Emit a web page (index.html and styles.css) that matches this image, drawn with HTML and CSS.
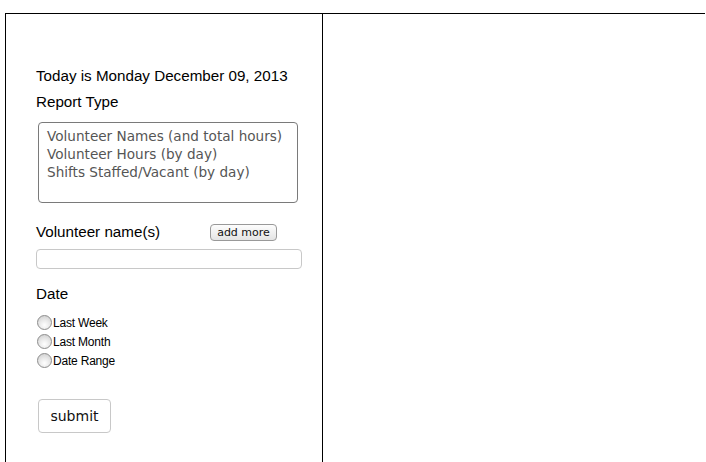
FILE: index.html
```html
<!DOCTYPE html>
<html>
<head>
<meta charset="utf-8">
<link rel="stylesheet" href="styles.css">
</head>
<body>
<div class="frame">
  <div class="side">
    <form class="form">
      <div class="today">Today is Monday December 09, 2013</div>
      <div class="label">Report Type</div>
      <div class="listbox">
        <div class="opt">Volunteer Names (and total hours)</div>
        <div class="opt">Volunteer Hours (by day)</div>
        <div class="opt">Shifts Staffed/Vacant (by day)</div>
      </div>
      <div class="namerow">
        <span class="label">Volunteer name(s)</span>
        <button type="button" class="addmore">add more</button>
      </div>
      <input class="textin" type="text">
      <div class="label date">Date</div>
      <div class="radios">
        <label class="radio"><input type="radio" name="d"><span>Last Week</span></label>
        <label class="radio"><input type="radio" name="d"><span>Last Month</span></label>
        <label class="radio"><input type="radio" name="d"><span>Date Range</span></label>
      </div>
      <button type="button" class="submit">submit</button>
    </form>
  </div>
  <div class="main"></div>
</div>
</body>
</html>
```

FILE: styles.css
```css
html, body {
  margin: 0;
  padding: 0;
  background: #fff;
}
body {
  font-family: "Liberation Sans", Arial, sans-serif;
  color: #000;
}
.frame {
  display: flex;
  margin: 13px 0 0 5px;
  width: 699px;
  height: 449px;
  border-top: 1px solid #000;
  border-left: 1px solid #000;
}
.side {
  width: 317px;
  border-right: 1px solid #000;
  padding: 53px 0 0 30px;
  box-sizing: border-box;
}
.main {
  flex: 1;
}
.form {
  display: flex;
  flex-direction: column;
  align-items: flex-start;
}
.today {
  font-size: 15.2px;
  line-height: 18px;
}
.label {
  font-size: 15.2px;
  line-height: 18px;
}
.today + .label {
  margin-top: 8px;
}
.listbox {
  margin: 11px 0 0 2px;
  width: 260px;
  height: 81px;
  box-sizing: border-box;
  border: 1px solid #7a7a7a;
  border-radius: 4px;
  padding: 4px 0 0 8px;
  font-family: "DejaVu Sans", sans-serif;
  color: #555;
  font-size: 13.6px;
  line-height: 18px;
}
.namerow {
  display: flex;
  align-items: center;
  width: 241px;
  justify-content: space-between;
  margin-top: 19px;
}
.addmore {
  font-family: "DejaVu Sans", sans-serif;
  font-size: 11px;
  color: #111;
  height: 17px;
  width: 67px;
  padding: 0;
  border: 1px solid #999;
  border-radius: 4px;
  background: linear-gradient(#fdfdfd, #e4e4e4);
  line-height: 15px;
  margin-top: 2px;
}
.textin {
  margin-top: 8px;
  width: 266px;
  height: 20px;
  box-sizing: border-box;
  border: 1px solid #c8c8c8;
  border-radius: 4px;
  padding: 0;
  background: #fff;
}
.date {
  margin-top: 16px;
}
.radios {
  margin-top: 10px;
  display: flex;
  flex-direction: column;
}
.radio {
  display: flex;
  align-items: center;
  height: 19px;
  font-size: 12px;
  font-family: "Liberation Sans", Arial, sans-serif;
  letter-spacing: -0.2px;
}
.radio input {
  appearance: none;
  -webkit-appearance: none;
  width: 15px;
  height: 15px;
  margin: 0 1px 0 1px;
  border: 1px solid #8c8c8c;
  border-radius: 50%;
  background: radial-gradient(circle at 50% 70%, #ffffff 0%, #e9e9e9 45%, #c9c9c9 100%);
  box-sizing: border-box;
}
.submit {
  margin: 29px 0 0 2px;
  width: 73px;
  height: 34px;
  box-sizing: border-box;
  border: 1px solid #c8c8c8;
  border-radius: 4px;
  background: #fff;
  font-family: "DejaVu Sans", sans-serif;
  font-size: 14px;
  color: #111;
  padding: 0;
}
```
